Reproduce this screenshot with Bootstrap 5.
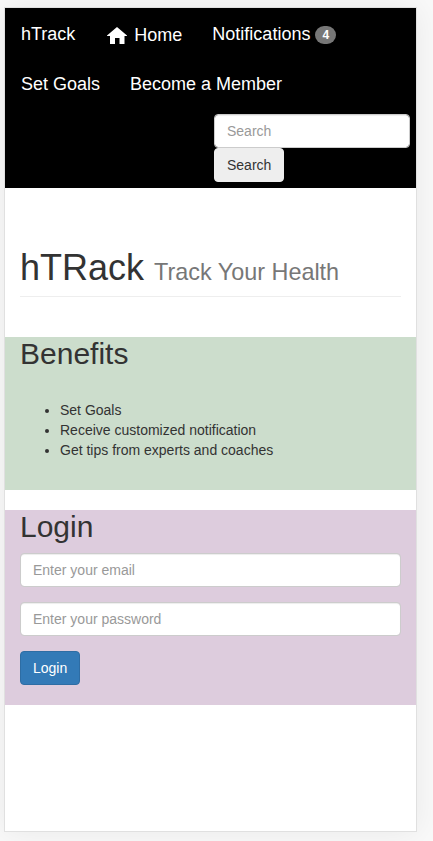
<!DOCTYPE html>
<html lang="en">
<head>
<meta charset="utf-8">
<meta name="viewport" content="width=device-width, initial-scale=1">
<title>hTrack</title>
<link rel="stylesheet" href="https://cdn.jsdelivr.net/npm/bootstrap@5.3.0/dist/css/bootstrap.min.css">
<style>
body { font: 14px/20px "Liberation Sans", Arial, sans-serif; color: #333; background: #f9f9f9; height: 841px; overflow: hidden; }
.device { width: 413px; height: 825px; margin: 7px 0 0 4px; border: 1px solid #e0e0e0; background: #fff; box-shadow: 0 0 30px rgba(0,0,0,.07); }
.topbar { background: #000; height: 180px; }
.topbar .nav-link { font-size: 18px; line-height: 20px; padding: 16px 15px 14px; height: 50px; color: #fff; white-space: nowrap; }
.topbar .home-link { padding: 17px 15px 13px 17px; }
.topbar .nav-link.brand { padding-left: 16px; }
.home-icon { width: 20px; height: 17px; margin: 2px 7px 0 0; display: block; }
.count { font-size: 12px; line-height: 12px; padding: 3px 7px; border-radius: 10px; background: #777; margin: 2px 0 0 5px; height: 18px; }
.form-control { height: 34px; font-size: 14px; line-height: 20px; padding: 6px 12px; border: 1px solid #ccc; border-radius: 4px; color: #555; box-shadow: inset 0 1px 1px rgba(0,0,0,.075); }
.form-control::placeholder { color: #999; }
.btn { height: 34px; font-size: 14px; line-height: 20px; padding: 6px 12px; border-radius: 4px; }
.search-form { width: 196px; margin-right: 6px; margin-top: 6px; }
.btn-search, .btn-search:hover { background: #eee; border-color: #eee; color: #333; }
.btn-login, .btn-login:hover { background: #337ab7; border-color: #2e6da4; color: #fff; }
.page-title { margin: 60px 15px 40px; height: 49px; border-bottom: 1px solid #eee; }
h1, h2 { margin: 0; font-weight: 400; }
h1 { font-size: 36px; line-height: 39.6px; }
h1 small { font-size: 23.4px; line-height: 1; color: #777; }
h2 { font-size: 30px; line-height: 33px; }
.panel-benefits { background: #cdc; height: 153px; padding: 0 15px; margin-bottom: 20px; }
.panel-benefits ul { margin: 30px 0 0; padding-left: 40px; }
.panel-login { background: #dcd; padding: 0 15px 20px; }
.panel-login h2 { margin-bottom: 10px; }
.panel-login .form-control { margin-bottom: 15px; }
</style>
</head>
<body>
<div class="device">
  <nav class="topbar">
    <div class="d-flex">
      <a class="nav-link brand" href="#">hTrack</a>
      <a class="nav-link home-link d-flex" href="#"><svg class="home-icon" viewBox="0 0 20 17" fill="#fff" aria-hidden="true"><path d="M10 0 20 8.5V9H17.5V17H12.5V11H8V17H3V9H0V8.5Z"/></svg>Home</a>
      <a class="nav-link d-flex" href="#">Notifications<span class="badge count">4</span></a>
    </div>
    <div class="d-flex">
      <a class="nav-link brand" href="#">Set Goals</a>
      <a class="nav-link" href="#">Become a Member</a>
    </div>
    <form class="search-form ms-auto">
      <input class="form-control" type="text" placeholder="Search" aria-label="Search">
      <button class="btn btn-search d-block" type="button">Search</button>
    </form>
  </nav>
  <header class="page-title">
    <h1>hTRack <small>Track Your Health</small></h1>
  </header>
  <section class="panel-benefits">
    <h2>Benefits</h2>
    <ul>
      <li>Set Goals</li>
      <li>Receive customized notification</li>
      <li>Get tips from experts and coaches</li>
    </ul>
  </section>
  <section class="panel-login">
    <h2>Login</h2>
    <form>
      <input class="form-control" type="email" placeholder="Enter your email" aria-label="Email">
      <input class="form-control" type="password" placeholder="Enter your password" aria-label="Password">
      <button class="btn btn-login d-block" type="button">Login</button>
    </form>
  </section>
</div>
<script src="https://cdn.jsdelivr.net/npm/bootstrap@5.3.0/dist/js/bootstrap.bundle.min.js"></script>
</body>
</html>
